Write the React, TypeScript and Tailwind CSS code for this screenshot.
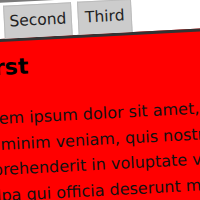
export default function App() {
  return (
    <div className="w-[200px] h-[200px] overflow-hidden bg-[#7a7a7a] font-['DejaVu_Sans',sans-serif]">
      <div className="ml-[-60px] mt-[5.6px] w-[1400px] h-[420px] bg-white origin-top-left rotate-[-3deg] pl-[11px] pt-[3px]">
        <div className="flex gap-[6px] h-[33px] text-[15.5px] text-[#222]">
          <div className="w-[46px] h-[33px] flex items-center justify-center bg-[#ff0000] border border-b-0 border-[#333]">First</div>
          <div className="w-[68px] h-[33px] flex items-center justify-center bg-[#cccccc] border border-b-0 border-[#bcbcbc]">Second</div>
          <div className="w-[54px] h-[33px] flex items-center justify-center bg-[#cccccc] border border-b-0 border-[#bcbcbc]">Third</div>
        </div>
        <div className="h-[384px] border-t-[3px] border-[#333333] bg-[#ff0000] pl-[17px] pt-[11px] text-[#111]">
          <h2 className="text-[22px] leading-[30px] font-bold text-black">First</h2>
          <p className="mt-[23px] text-[16px] leading-[25.6px] whitespace-nowrap">
            Lorem ipsum dolor sit amet, consectetur adipisicing elit, sed do eiusmod tempor incididunt ut labore et dolore magna aliqua. Ut enim
            <br />
            ad minim veniam, quis nostrud exercitation ullamco laboris nisi ut aliquip ex ea commodo consequat. Duis aute irure dolor in
            <br />
            reprehenderit in voluptate velit esse cillum dolore eu fugiat nulla pariatur. Excepteur sint occaecat cupidatat non proident, sunt in
            <br />
            culpa qui officia deserunt mollit anim id est laborum.
          </p>
        </div>
      </div>
    </div>
  );
}
